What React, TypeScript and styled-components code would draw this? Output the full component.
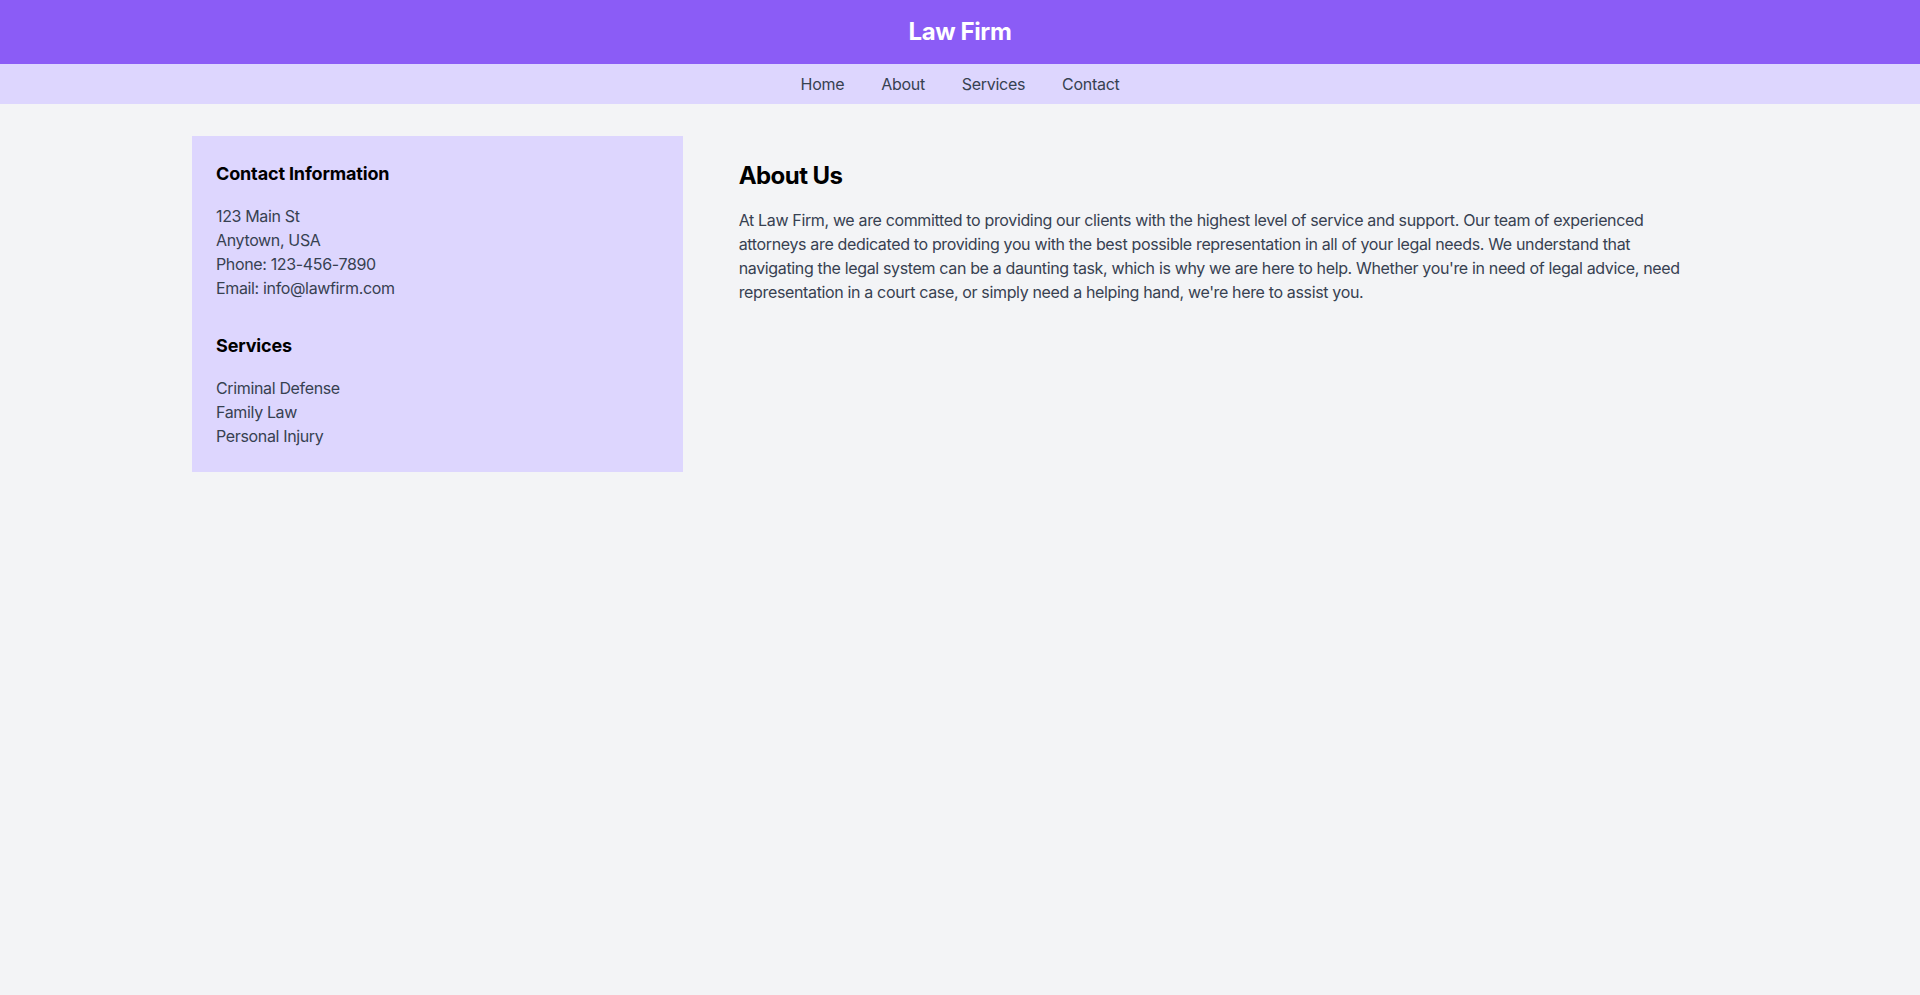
import React from "react";
import styled, { createGlobalStyle } from "styled-components";

const GlobalStyle = createGlobalStyle`
  html, body { margin: 0; padding: 0; }
  body {
    background: #f3f4f6;
    font-family: Inter, "Noto Sans", "Liberation Sans", sans-serif;
    color: #374151;
    -webkit-font-smoothing: antialiased;
  }
  * { box-sizing: border-box; }
`;

const Page = styled.div`
  min-height: 100vh;
  background: #f3f4f6;
`;

const Header = styled.header`
  background: #8b5cf6;
  padding: 16px;
  text-align: center;
`;

const Title = styled.h1`
  margin: 0;
  font-size: 24px;
  line-height: 32px;
  font-weight: 700;
  letter-spacing: -0.4px;
  color: #ffffff;
`;

const Nav = styled.nav`
  background: #ddd6fe;
  padding: 8px 0;
  display: flex;
  justify-content: center;
  gap: 37px;
`;

const NavLink = styled.a`
  font-size: 16px;
  line-height: 24px;
  letter-spacing: -0.3px;
  color: #374151;
  text-decoration: none;
  cursor: pointer;
`;

const Container = styled.main`
  max-width: 1536px;
  margin: 32px auto 0;
  display: grid;
  grid-template-columns: repeat(3, minmax(0, 1fr));
  gap: 32px;
  align-items: start;
`;

const Sidebar = styled.aside`
  background: #ddd6fe;
  padding: 24px;
`;

const SideTitle = styled.h2<{ $spaced?: boolean }>`
  margin: ${(p) => (p.$spaced ? "32px" : "0")} 0 16px;
  font-size: 18px;
  line-height: 28px;
  font-weight: 700;
  letter-spacing: -0.15px;
  color: #000000;
`;

const Lines = styled.ul`
  list-style: none;
  margin: 0;
  padding: 0;
`;

const Line = styled.li`
  font-size: 16px;
  line-height: 24px;
  letter-spacing: -0.35px;
  color: #374151;
`;

const Content = styled.section`
  grid-column: span 2;
  padding: 24px;
`;

const ContentTitle = styled.h2`
  margin: 0 0 16px;
  font-size: 24px;
  line-height: 32px;
  font-weight: 700;
  letter-spacing: -0.55px;
  color: #000000;
`;

const Paragraph = styled.p`
  margin: 0;
  font-size: 16px;
  line-height: 24px;
  letter-spacing: -0.35px;
  color: #374151;
`;

export default function App() {
  return (
    <Page>
      <GlobalStyle />
      <Header>
        <Title>Law Firm</Title>
      </Header>
      <Nav>
        <NavLink>Home</NavLink>
        <NavLink>About</NavLink>
        <NavLink>Services</NavLink>
        <NavLink>Contact</NavLink>
      </Nav>
      <Container>
        <Sidebar>
          <SideTitle>Contact Information</SideTitle>
          <Lines>
            <Line>123 Main St</Line>
            <Line>Anytown, USA</Line>
            <Line>Phone: 123-456-7890</Line>
            <Line>Email: info@lawfirm.com</Line>
          </Lines>
          <SideTitle $spaced>Services</SideTitle>
          <Lines>
            <Line>Criminal Defense</Line>
            <Line>Family Law</Line>
            <Line>Personal Injury</Line>
          </Lines>
        </Sidebar>
        <Content>
          <ContentTitle>About Us</ContentTitle>
          <Paragraph>
            At Law Firm, we are committed to providing our clients with the highest level of service and
            support. Our team of experienced attorneys are dedicated to providing you with the best possible
            representation in all of your legal needs. We understand that navigating the legal system can be a
            daunting task, which is why we are here to help. Whether you're in need of legal advice, need
            representation in a court case, or simply need a helping hand, we're here to assist you.
          </Paragraph>
        </Content>
      </Container>
    </Page>
  );
}
